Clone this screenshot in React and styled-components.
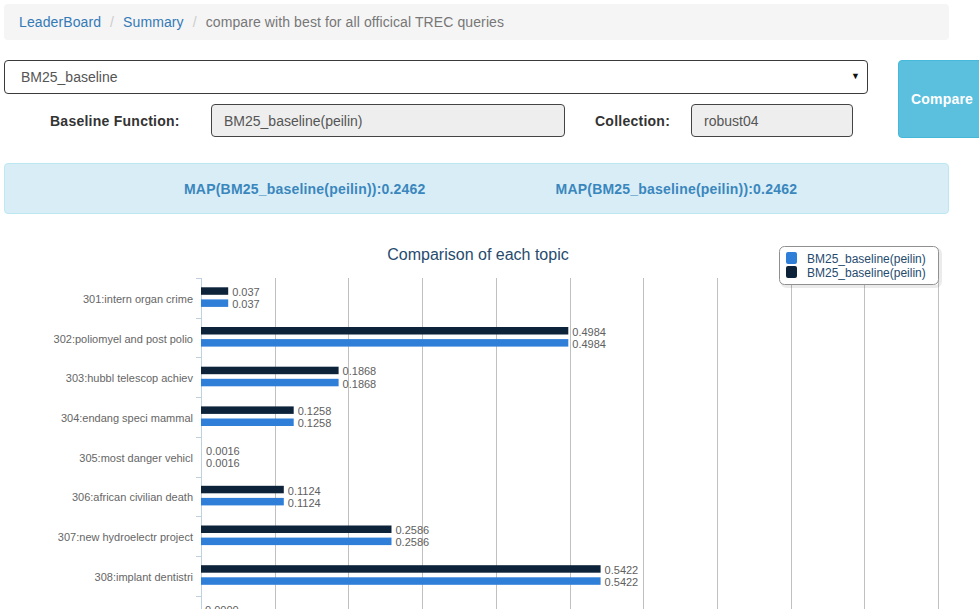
import React from 'react'
import styled, { createGlobalStyle } from 'styled-components'

const GlobalStyle = createGlobalStyle`
  * { box-sizing: border-box; }
  body {
    margin: 0;
    font-family: "Liberation Sans", Arial, sans-serif;
    font-size: 14px;
    color: #333;
    background: #fff;
    overflow-x: hidden;
  }
`

const Page = styled.div`
  width: 979px;
  padding: 4px 0 0 4px;
`

const Breadcrumb = styled.ol`
  list-style: none;
  margin: 0 0 20px;
  padding: 0 15px;
  width: 945px;
  height: 36px;
  display: flex;
  align-items: center;
  background: #f5f5f5;
  border-radius: 4px;
  letter-spacing: 0.1px;
`

const Crumb = styled.li`
  color: ${(p) => (p.$active ? '#777' : '#337ab7')};
  &:not(:first-child):before {
    content: "/";
    padding: 0 9px;
    color: #ccc;
  }
`

const FormRow = styled.div`
  display: flex;
  align-items: flex-start;
  gap: 30px;
`

const Left = styled.div`
  width: 864px;
  flex-shrink: 0;
  display: flex;
  flex-direction: column;
  gap: 10px;
`

const SelectBox = styled.div`
  position: relative;
  height: 34px;
  border: 1px solid #3a3a3a;
  border-radius: 4px;
  padding: 0 16px;
  display: flex;
  align-items: center;
  color: #555;
`

const Arrow = styled.span`
  position: absolute;
  right: 7px;
  top: 10px;
  font-size: 9px;
  color: #111;
`

const FieldRow = styled.div`
  display: flex;
  align-items: center;
  padding-left: 46px;
`

const Label = styled.label`
  width: ${(p) => p.$width}px;
  font-weight: bold;
  letter-spacing: 0.25px;
  color: #333;
`

const Field = styled.div`
  width: ${(p) => p.$width}px;
  height: 33px;
  margin-right: ${(p) => p.$after || 0}px;
  padding: 0 12px;
  display: flex;
  align-items: center;
  background: #eee;
  border: 1px solid #444;
  border-radius: 4px;
  color: #555;
`

const CompareButton = styled.button`
  width: 88px;
  height: 78px;
  flex-shrink: 0;
  background: #5bc0de;
  border: 1px solid #46b8da;
  border-radius: 4px;
  color: #fff;
  font-family: inherit;
  font-size: 14px;
  font-weight: bold;
  letter-spacing: 0.2px;
`

const Alert = styled.div`
  margin-top: 25px;
  width: 945px;
  height: 51px;
  display: flex;
  align-items: center;
  gap: 130px;
  padding-left: 179px;
  background: #d9edf7;
  border: 1px solid #bce8f1;
  border-radius: 4px;
  color: #3a87bd;
  font-weight: bold;
  letter-spacing: 0.2px;
`

const ChartWrap = styled.div`
  margin-top: 20px;
`

const ChartTitle = styled.text`
  font-size: 16px;
  fill: #274b6d;
`

const LegendText = styled.text`
  font-size: 12px;
  fill: #274b6d;
`

const TopicLabel = styled.text`
  font-size: 11px;
  fill: #666;
`

const ValueLabel = styled.text`
  font-size: 11px;
  fill: #606060;
`

const BLUE = '#2f7ed8'
const DARK = '#0d233a'

const topics = [
  ['301:intern organ crime', 0.037, '0.037'],
  ['302:poliomyel and post polio', 0.4984, '0.4984'],
  ['303:hubbl telescop achiev', 0.1868, '0.1868'],
  ['304:endang speci mammal', 0.1258, '0.1258'],
  ['305:most danger vehicl', 0.0016, '0.0016'],
  ['306:african civilian death', 0.1124, '0.1124'],
  ['307:new hydroelectr project', 0.2586, '0.2586'],
  ['308:implant dentistri', 0.5422, '0.5422'],
  ['309:rap and crime', 0, '0.0000'],
  ['310:radio wave and brain cancer', 0.0473, '0.0473'],
]

const PLOT_LEFT = 197
const PLOT_TOP = 44
const SCALE = 737
const CAT_H = 39.7
const BAR_H = 7.5

const Chart = () => {
  const bottom = PLOT_TOP + topics.length * CAT_H
  return (
    <svg width="945" height={bottom + 20} fontFamily='"Liberation Sans", Arial, sans-serif'>
      <ChartTitle x="474" y="26" textAnchor="middle">Comparison of each topic</ChartTitle>

      {Array.from({ length: 10 }, (_, i) => {
        const x = Math.round(PLOT_LEFT + (i + 1) * (SCALE / 10)) + 0.5
        return <line key={i} x1={x} x2={x} y1={PLOT_TOP} y2={bottom} stroke="#c0c0c0" />
      })}

      <line x1={PLOT_LEFT + 0.5} x2={PLOT_LEFT + 0.5} y1={PLOT_TOP} y2={bottom} stroke="#c0d0e0" />
      {Array.from({ length: topics.length + 1 }, (_, k) => {
        const y = Math.round(PLOT_TOP + k * CAT_H) + 0.5
        return <line key={k} x1={PLOT_LEFT - 5} x2={PLOT_LEFT} y1={y} y2={y} stroke="#c0d0e0" />
      })}

      {topics.map(([name, v, text], i) => {
        const top = PLOT_TOP + i * CAT_H
        const w = Math.floor(v * SCALE * 10) / 10
        const barW = w < 1.5 ? 0 : w
        const darkY = top + 9.3
        const blueY = top + 21.4
        return (
          <g key={name}>
            <TopicLabel x={PLOT_LEFT - 8} y={top + CAT_H / 2 + 5} textAnchor="end">{name}</TopicLabel>
            <rect x={PLOT_LEFT} y={darkY} width={barW} height={BAR_H} fill={DARK} />
            <rect x={PLOT_LEFT} y={blueY} width={barW} height={BAR_H} fill={BLUE} />
            <ValueLabel x={PLOT_LEFT + w + 4} y={darkY + BAR_H / 2 + 5}>{text}</ValueLabel>
            <ValueLabel x={PLOT_LEFT + w + 4} y={blueY + BAR_H / 2 + 5}>{text}</ValueLabel>
          </g>
        )
      })}

      <rect x="777.5" y="14.5" width="159" height="38" rx="5" fill="none" stroke="rgba(0,0,0,0.08)" strokeWidth="3" />
      <rect x="775.5" y="12.5" width="159" height="38" rx="5" fill="#fff" stroke="#909090" />
      <rect x="782" y="18" width="11" height="12" rx="2" fill={BLUE} />
      <LegendText x="803" y="29">BM25_baseline(peilin)</LegendText>
      <rect x="782" y="32" width="11" height="12" rx="2" fill={DARK} />
      <LegendText x="803" y="43">BM25_baseline(peilin)</LegendText>
    </svg>
  )
}

const App = () => (
  <Page>
    <GlobalStyle />
    <Breadcrumb>
      <Crumb>LeaderBoard</Crumb>
      <Crumb>Summary</Crumb>
      <Crumb $active>compare with best for all officical TREC queries</Crumb>
    </Breadcrumb>

    <FormRow>
      <Left>
        <SelectBox>
          BM25_baseline
          <Arrow>▼</Arrow>
        </SelectBox>
        <FieldRow>
          <Label $width={161}>Baseline Function:</Label>
          <Field $width={354} $after={30}>BM25_baseline(peilin)</Field>
          <Label $width={96}>Collection:</Label>
          <Field $width={162}>robust04</Field>
        </FieldRow>
      </Left>
      <CompareButton>Compare</CompareButton>
    </FormRow>

    <Alert>
      <span>MAP(BM25_baseline(peilin)):0.2462</span>
      <span>MAP(BM25_baseline(peilin)):0.2462</span>
    </Alert>

    <ChartWrap>
      <Chart />
    </ChartWrap>
  </Page>
)

export default App
